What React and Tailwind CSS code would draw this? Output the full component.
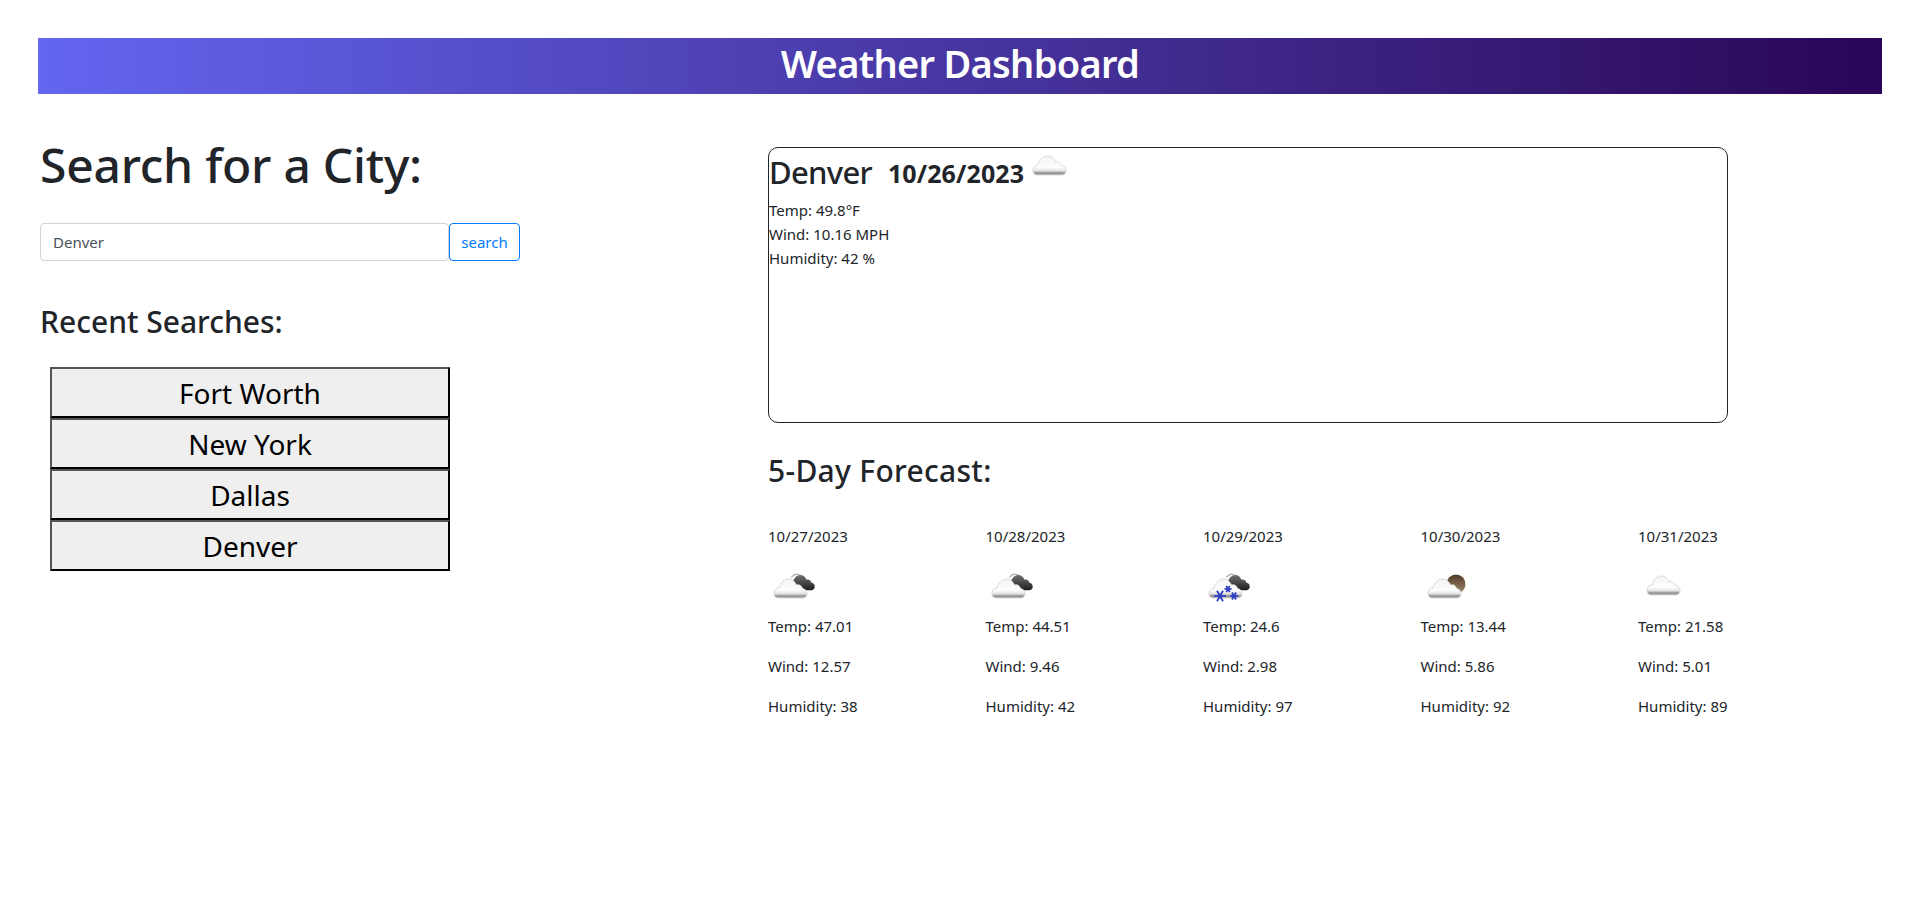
const font = { fontFamily: '"Noto Sans", sans-serif' }

const forecast = [
  { date: '10/27/2023', icon: 'night-cloud', temp: '47.01', wind: '12.57', humidity: '38' },
  { date: '10/28/2023', icon: 'night-cloud', temp: '44.51', wind: '9.46', humidity: '42' },
  { date: '10/29/2023', icon: 'snow', temp: '24.6', wind: '2.98', humidity: '97' },
  { date: '10/30/2023', icon: 'moon', temp: '13.44', wind: '5.86', humidity: '92' },
  { date: '10/31/2023', icon: 'cloud', temp: '21.58', wind: '5.01', humidity: '89' },
]

const recent = ['Fort Worth', 'New York', 'Dallas', 'Denver']

const cloudPath = 'M4 19C1 19 0 16.5 0 14C0 11 2.5 9 5 9C6 4 10 0 14.5 0C18 0 21 2.5 22.5 6C25 5 28 6.5 28.5 9.5C31 10 33 11.5 33 14.5C33 17 31.5 19 29 19Z'

function Flake({ x, y, r }) {
  return (
    <g stroke="#2f3fc4" strokeWidth="1.8" transform={`translate(${x} ${y})`}>
      <line x1={-r} y1="0" x2={r} y2="0" />
      <line x1={-r / 2} y1={-r * 0.87} x2={r / 2} y2={r * 0.87} />
      <line x1={-r / 2} y1={r * 0.87} x2={r / 2} y2={-r * 0.87} />
    </g>
  )
}

function WeatherIcon({ type, id }) {
  const cx = type === 'cloud' ? 9 : type === 'moon' ? 7 : 6
  const cy = type === 'cloud' ? 12 : 15
  return (
    <svg width="50" height="50" viewBox="0 0 50 50" className="block">
      <defs>
        <linearGradient id={`white-${id}`} x1="0" y1="0" x2="0" y2="1">
          <stop offset="0" stopColor="#f4f4f4" />
          <stop offset="0.6" stopColor="#fdfdfd" />
          <stop offset="0.78" stopColor="#e2e2e2" />
          <stop offset="0.9" stopColor="#8f8f8f" />
          <stop offset="1" stopColor="#a8a8a8" />
        </linearGradient>
        <linearGradient id={`dark-${id}`} x1="0" y1="0" x2="0" y2="1">
          <stop offset="0" stopColor="#707070" />
          <stop offset="0.6" stopColor="#3f3f3f" />
          <stop offset="1" stopColor="#1c1c1c" />
        </linearGradient>
        <linearGradient id={`moon-${id}`} x1="0" y1="0" x2="0" y2="1">
          <stop offset="0" stopColor="#4d3a28" />
          <stop offset="0.5" stopColor="#7b6248" />
          <stop offset="1" stopColor="#a08a70" />
        </linearGradient>
      </defs>
      {(type === 'night-cloud' || type === 'snow') && (
        <g transform="translate(21 11) scale(0.78 0.8)">
          <path d="M3 3C8 -3 14 -2 17 4" fill="none" stroke="#a8a8a8" strokeWidth="1.4" />
          <path d={cloudPath} fill={`url(#dark-${id})`} />
        </g>
      )}
      {type === 'moon' && <circle cx="35" cy="20" r="9.5" fill={`url(#moon-${id})`} />}
      <g transform={`translate(${cx} ${cy})`}>
        <path d={cloudPath} fill={`url(#white-${id})`} stroke="#d6d6d6" strokeWidth="0.9" />
      </g>
      {type === 'snow' && (
        <>
          <Flake x={17} y={32} r={6} />
          <Flake x={25} y={25} r={3.5} />
          <Flake x={31} y={32} r={4} />
        </>
      )}
    </svg>
  )
}

export default function App() {
  return (
    <div className="min-h-screen bg-white px-[38px] pt-[38px] text-[#212529] text-[15px] leading-6" style={font}>
      <header className="h-[56px] bg-linear-to-r from-[#6366f1] to-[#2a0557] text-center text-white text-[38px] font-semibold leading-[50px] tracking-[-0.7px]">
        Weather Dashboard
      </header>

      <div className="flex mt-[47px]">
        <div className="w-[730px] pl-[2px]">
          <h1 className="text-[48px] font-medium leading-[48px] tracking-[-0.25px]">Search for a City:</h1>
          <div className="flex mt-[34px]">
            <input
              readOnly
              value="Denver"
              className="w-[409px] h-[38px] border border-[#ced4da] rounded px-3 text-[#495057] text-[15px] bg-white outline-none"
            />
            <button className="w-[71px] h-[38px] border border-[#007bff] rounded text-[#007bff] text-[15px]">search</button>
          </div>
          <h3 className="mt-[44px] text-[30px] font-medium leading-[34px]">Recent Searches:</h3>
          <div className="mt-[28px] ml-[10px] w-[400px]">
            {recent.map(city => (
              <button
                key={city}
                className="block w-full h-[51px] bg-[#efefef] border-2 border-t-[#555555] border-l-[#555555] border-r-black border-b-black text-black text-[28px] leading-[42px]"
              >
                {city}
              </button>
            ))}
          </div>
        </div>

        <div className="w-[960px] mt-[6px]">
          <section className="h-[276px] border border-[#212529] rounded-[10px]">
            <div className="flex items-center h-[50px]">
              <h2 className="text-[31px] font-medium leading-[46px] tracking-[-0.7px] -mt-[3px]">Denver</h2>
              <span className="ml-4 text-[25px] font-bold tracking-[0.1px]">10/26/2023</span>
              <div className="w-[50px] -mt-[9px]"><WeatherIcon type="cloud" id="main" /></div>
            </div>
            <p>Temp: 49.8°F</p>
            <p>Wind: 10.16 MPH</p>
            <p>Humidity: 42 %</p>
          </section>

          <h3 className="mt-[31px] text-[30px] font-medium leading-[34px] tracking-[0.3px]">5-Day Forecast:</h3>

          <div className="flex justify-between mt-[36px]">
            {forecast.map((day, i) => (
              <div key={day.date} className="w-[90px]">
                <p className="mb-4 whitespace-nowrap">{day.date}</p>
                <WeatherIcon type={day.icon} id={`f${i}`} />
                <p className="mb-4 whitespace-nowrap">Temp: {day.temp}</p>
                <p className="mb-4 whitespace-nowrap">Wind: {day.wind}</p>
                <p className="whitespace-nowrap">Humidity: {day.humidity}</p>
              </div>
            ))}
          </div>
        </div>
      </div>
    </div>
  )
}
